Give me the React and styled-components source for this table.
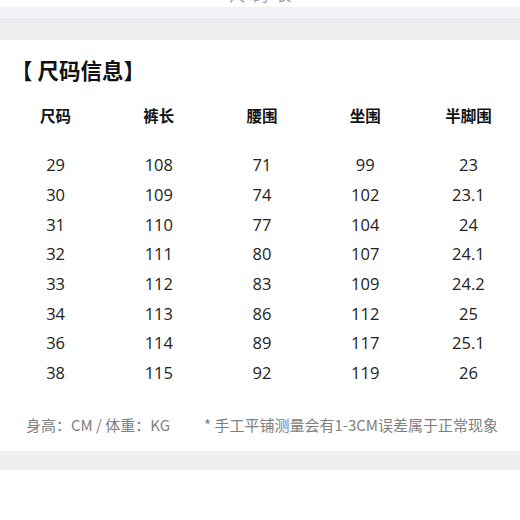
import React from 'react';
import styled, { createGlobalStyle } from 'styled-components';

const GlobalStyle = createGlobalStyle`
  html, body {
    margin: 0;
    padding: 0;
    background: #fff;
  }
  body {
    font-family: "Noto Sans CJK SC", "Noto Sans", sans-serif;
    color: #222;
  }
`;

const headers = ['尺码', '裤长', '腰围', '坐围', '半脚围'];

const rows = [
  ['29', '108', '71', '99', '23'],
  ['30', '109', '74', '102', '23.1'],
  ['31', '110', '77', '104', '24'],
  ['32', '111', '80', '107', '24.1'],
  ['33', '112', '83', '109', '24.2'],
  ['34', '113', '86', '112', '25'],
  ['36', '114', '89', '117', '25.1'],
  ['38', '115', '92', '119', '26'],
];

export default function App() {
  return (
    <Page>
      <GlobalStyle />
      <TopStrip>
        <CutText>尺码表</CutText>
      </TopStrip>
      <Band>
        <BandTop />
        <BandLine />
        <BandBottom />
      </Band>
      <Card>
        <Title>【 尺码信息】</Title>
        <Table>
          <HeadRow>
            {headers.map(h => <HeadCell key={h}>{h}</HeadCell>)}
          </HeadRow>
          <Body>
            {rows.map((r, i) => (
              <Row key={i}>
                {r.map((v, j) => <Cell key={j}>{v}</Cell>)}
              </Row>
            ))}
          </Body>
        </Table>
        <Footer>
          <Note>身高：CM / 体重：KG</Note>
          <Note>* 手工平铺测量会有1-3CM误差属于正常现象</Note>
        </Footer>
      </Card>
      <BottomBand />
    </Page>
  );
}

const Page = styled.div`
  width: 520px;
  height: 520px;
  overflow: hidden;
  background: #fff;
`;

const TopStrip = styled.div`
  height: 7px;
  overflow: hidden;
  display: flex;
  justify-content: center;
`;

const CutText = styled.div`
  margin-top: -15px;
  margin-left: 8px;
  font-size: 16px;
  line-height: 18px;
  letter-spacing: 7px;
  color: #999;
`;

const Band = styled.div`
  display: flex;
  flex-direction: column;
`;

const BandTop = styled.div`
  height: 12px;
  background: #f2f2f6;
`;

const BandLine = styled.div`
  height: 1px;
  background: #e3e3e9;
`;

const BandBottom = styled.div`
  height: 20px;
  background: #eeeeee;
`;

const Card = styled.div`
  height: 411px;
  display: flex;
  flex-direction: column;
`;

const Title = styled.h1`
  margin: 17px 0 0 11px;
  font-size: 21.5px;
  line-height: 26px;
  font-weight: 700;
  color: #111;
`;

const Table = styled.div`
  padding-left: 4px;
  margin-top: 17px;
`;

const HeadRow = styled.div`
  display: grid;
  grid-template-columns: repeat(5, 1fr);
  height: 30px;
  align-items: center;
`;

const HeadCell = styled.div`
  text-align: center;
  font-size: 15.5px;
  font-weight: 700;
  color: #111;
`;

const Body = styled.div`
  margin-top: 20px;
`;

const Row = styled.div`
  display: grid;
  grid-template-columns: repeat(5, 1fr);
  height: 29.7px;
  align-items: center;
`;

const Cell = styled.div`
  text-align: center;
  font-family: "Open Sans", "Noto Sans", sans-serif;
  font-size: 16.5px;
  color: #222;
`;

const Footer = styled.div`
  display: flex;
  justify-content: space-between;
  padding: 0 22px 0 26px;
  margin-top: 27px;
`;

const Note = styled.div`
  font-size: 15px;
  line-height: 20px;
  color: #808080;
`;

const BottomBand = styled.div`
  height: 19px;
  background: #efefef;
`;
